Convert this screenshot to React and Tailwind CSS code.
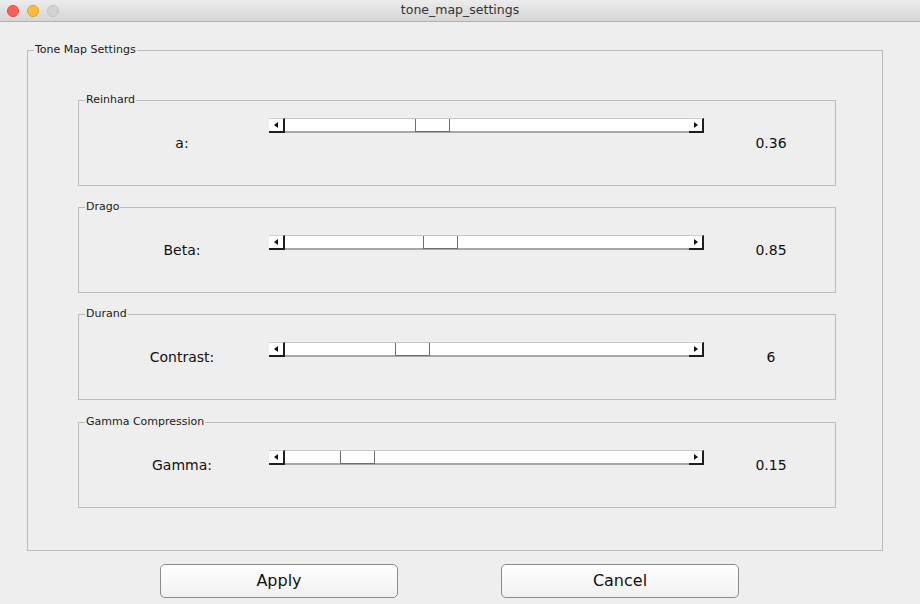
import React from 'react';

const groups = [
  { id: 1, title: 'Reinhard', label: 'a:', value: '0.36', thumb: 130, sliderTop: 'mt-[12px]', extra: '' },
  { id: 2, title: 'Drago', label: 'Beta:', value: '0.85', thumb: 138, sliderTop: 'mt-[22px]', extra: '' },
  { id: 3, title: 'Durand', label: 'Contrast:', value: '6', thumb: 110, sliderTop: 'mt-[22px]', extra: '' },
  { id: 4, title: 'Gamma Compression', label: 'Gamma:', value: '0.15', thumb: 55, sliderTop: 'mt-[22px]', extra: 'mt-[1px]' },
];

const Slider = ({ thumb, className }) => (
  <div className={`flex h-[15px] w-[435px] ${className}`}>
    <div className="flex w-[16px] items-center justify-center border-t border-t-[#d0d0d0] border-b-2 border-r-2 border-b-[#1e1e1e] border-r-[#1e1e1e] bg-white">
      <svg width="4" height="6" viewBox="0 0 4 6">
        <polygon points="4,0 0,3 4,6" fill="#111" />
      </svg>
    </div>
    <div className="relative flex-1 border-t border-t-[#c6c6c6] border-b-2 border-b-[#a8a8a8] bg-white">
      <div
        className="absolute -bottom-[1px] top-0 w-[35px] border-x border-b border-[#6e6e6e] bg-white"
        style={{ left: thumb }}
      />
    </div>
    <div className="flex w-[15px] items-center justify-center border-t border-t-[#d0d0d0] border-b-2 border-r-2 border-b-[#1e1e1e] border-r-[#1e1e1e] bg-white">
      <svg width="4" height="6" viewBox="0 0 4 6">
        <polygon points="0,0 4,3 0,6" fill="#111" />
      </svg>
    </div>
  </div>
);

const Group = ({ group }) => (
  <fieldset className={`m-0 w-[758px] border border-[#bcbcbc] p-0 ${group.extra}`}>
    <legend className="ml-[6px] px-[1px] text-[11px] leading-[12px] text-[#1a1a1a]">
      {group.title}
    </legend>
    <div className="flex h-[79px] items-start">
      <div className="ml-[20px] mt-[29px] w-[166px] text-center text-[14px] leading-[17px] text-[#111]">
        {group.label}
      </div>
      <Slider thumb={group.thumb} className={`ml-[4px] ${group.sliderTop}`} />
      <div className="ml-[37px] mt-[29px] w-[60px] text-center text-[14px] leading-[17px] text-[#111]">
        {group.value}
      </div>
    </div>
  </fieldset>
);

export default function App() {
  return (
    <div
      className="flex h-[604px] w-[920px] flex-col overflow-hidden bg-[#eeeeee]"
      style={{ fontFamily: '"DejaVu Sans", "Liberation Sans", sans-serif' }}
    >
      {/* title bar */}
      <div className="relative flex h-[22px] shrink-0 items-center justify-center border-b border-[#b1b1b1] bg-gradient-to-b from-[#ececec] to-[#d5d5d5]">
        <div className="absolute left-[7px] top-[5px] flex gap-[8px]">
          <span className="h-[12px] w-[12px] rounded-full border border-[#e2463f] bg-[#fc605c]" />
          <span className="h-[12px] w-[12px] rounded-full border border-[#e1a116] bg-[#fdbc40]" />
          <span className="h-[12px] w-[12px] rounded-full border border-[#c4c4c4] bg-[#d2d2d2]" />
        </div>
        <span className="text-[12.5px] text-[#333]">tone_map_settings</span>
      </div>

      <fieldset className="m-0 ml-[27px] mt-[22px] w-[856px] border border-[#bcbcbc] p-0 pb-[42px]">
        <legend className="ml-[6px] px-[1px] text-[11px] leading-[12px] text-[#1a1a1a]">
          Tone Map Settings
        </legend>
        <div className="ml-[50px] mt-[38px] flex flex-col gap-[15px]">
          {groups.map((g) => (
            <Group key={g.id} group={g} />
          ))}
        </div>
      </fieldset>

      <div className="ml-[160px] mt-[13px] flex gap-[103px]">
        <button className="h-[34px] w-[238px] rounded-[5px] border border-[#8c8c8c] bg-gradient-to-b from-white to-[#f1f1f1] text-[16px] text-[#111]">
          Apply
        </button>
        <button className="h-[34px] w-[238px] rounded-[5px] border border-[#8c8c8c] bg-gradient-to-b from-white to-[#f1f1f1] text-[16px] text-[#111]">
          Cancel
        </button>
      </div>
    </div>
  );
}
